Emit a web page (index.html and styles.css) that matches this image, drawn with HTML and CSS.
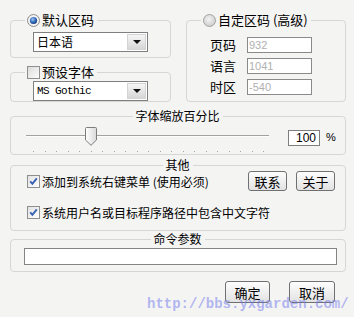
FILE: index.html
```html
<!DOCTYPE html>
<html lang="zh-CN">
<head>
    <meta charset="UTF-8">
    <meta name="viewport" content="width=device-width, initial-scale=1.0">
    <title>区码设置</title>
    <link rel="stylesheet" href="styles.css">
</head>
<body>
    <div class="dialog">
        <div class="top-row">
            <div class="left-col">
                <fieldset class="group">
                    <legend class="legend-left">
                        <span class="opt">
                            <svg class="radio" width="13" height="13" viewBox="0 0 13 13">
                                <defs>
                                    <radialGradient id="dot" cx="40%" cy="35%" r="70%">
                                        <stop offset="0" stop-color="#9fc4f0"/>
                                        <stop offset="0.6" stop-color="#2c66b8"/>
                                        <stop offset="1" stop-color="#12356e"/>
                                    </radialGradient>
                                </defs>
                                <circle cx="6.5" cy="6.5" r="6" fill="#f2f2f2" stroke="#8d8d8d"/>
                                <circle cx="6.5" cy="6.5" r="3.6" fill="url(#dot)"/>
                            </svg>
                            默认区码
                        </span>
                    </legend>
                    <div class="group-body body-code">
                        <div class="combo">
                            <span class="combo-text">日本语</span>
                            <span class="combo-btn"><i class="arrow"></i></span>
                        </div>
                    </div>
                </fieldset>
                <fieldset class="group grow">
                    <legend class="legend-left">
                        <span class="opt">
                            <span class="check"></span>
                            预设字体
                        </span>
                    </legend>
                    <div class="group-body body-font">
                        <div class="combo">
                            <span class="combo-text mono">MS Gothic</span>
                            <span class="combo-btn"><i class="arrow"></i></span>
                        </div>
                    </div>
                </fieldset>
            </div>
            <fieldset class="group right-group">
                <legend class="legend-left">
                    <span class="opt">
                        <svg class="radio" width="13" height="13" viewBox="0 0 13 13">
                            <defs>
                                <radialGradient id="off" cx="45%" cy="40%" r="65%">
                                    <stop offset="0" stop-color="#f4f4f4"/>
                                    <stop offset="1" stop-color="#c9c9c9"/>
                                </radialGradient>
                            </defs>
                            <circle cx="6.5" cy="6.5" r="6" fill="url(#off)" stroke="#a3a3a3"/>
                        </svg>
                        自定区码 (高级)
                    </span>
                </legend>
                <div class="group-body custom-grid">
                    <span class="field-label">页码</span>
                    <span class="num-box">932</span>
                    <span class="field-label">语言</span>
                    <span class="num-box">1041</span>
                    <span class="field-label">时区</span>
                    <span class="num-box">-540</span>
                </div>
            </fieldset>
        </div>

        <fieldset class="group scale-group">
            <legend class="legend-center">字体缩放百分比</legend>
            <div class="group-body scale-body">
                <div class="slider">
                    <div class="slider-track"></div>
                    <div class="slider-ticks">
                        <i></i><i></i><i></i><i></i><i></i><i></i><i></i>
                        <i></i><i></i><i></i><i></i><i></i><i></i><i></i>
                        <i></i><i></i><i></i><i></i><i></i><i></i><i></i>
                    </div>
                    <svg class="slider-thumb" width="12" height="19" viewBox="0 0 12 19">
                        <defs>
                            <linearGradient id="thumb" x1="0" y1="0" x2="1" y2="0">
                                <stop offset="0" stop-color="#ffffff"/>
                                <stop offset="1" stop-color="#d9d9d9"/>
                            </linearGradient>
                        </defs>
                        <path d="M1.5 0.5 H10.5 Q11.5 0.5 11.5 1.5 V13 L6 18.3 L0.5 13 V1.5 Q0.5 0.5 1.5 0.5 Z" fill="url(#thumb)" stroke="#7d7d7d"/>
                    </svg>
                </div>
                <span class="pct-box">100</span>
                <span class="pct-sign">%</span>
            </div>
        </fieldset>

        <fieldset class="group other-group">
            <legend class="legend-center">其他</legend>
            <div class="group-body other-body">
                <div class="other-row">
                    <span class="opt">
                        <span class="check checked">
                            <svg width="11" height="11" viewBox="0 0 11 11"><path d="M2.2 5.4 L4.4 7.8 L8.8 2.4" fill="none" stroke="#3c64b4" stroke-width="2"/></svg>
                        </span>
                        添加到系统右键菜单 (使用必须)
                    </span>
                    <div class="side-btns">
                        <span class="btn">联系</span>
                        <span class="btn">关于</span>
                    </div>
                </div>
                <div class="other-row second">
                    <span class="opt">
                        <span class="check checked">
                            <svg width="11" height="11" viewBox="0 0 11 11"><path d="M2.2 5.4 L4.4 7.8 L8.8 2.4" fill="none" stroke="#3c64b4" stroke-width="2"/></svg>
                        </span>
                        系统用户名或目标程序路径中包含中文字符
                    </span>
                </div>
            </div>
        </fieldset>

        <fieldset class="group cmd-group">
            <legend class="legend-center">命令参数</legend>
            <div class="group-body cmd-body">
                <div class="cmd-input"></div>
            </div>
        </fieldset>

        <div class="footer">
            <span class="btn btn-main ok">确定</span>
            <span class="btn btn-main cancel">取消</span>
        </div>
    </div>

    <div class="watermark">http://bbs.yxgarden.com/</div>
</body>
</html>
```

FILE: styles.css
```css
* {
    box-sizing: border-box;
}
body {
    margin: 0;
    width: 354px;
    height: 317px;
    background: #f4f4f3;
    font-family: "Noto Sans CJK SC", sans-serif;
    font-size: 12px;
    color: #000;
    position: relative;
    overflow: hidden;
}
.dialog {
    padding: 13px 8px 0 10px;
}

/* group boxes */
.group {
    margin: 0;
    padding: 0;
    border: 1px solid #d6d6d4;
    border-radius: 4px;
    min-inline-size: 0;
}
.group legend {
    padding: 0 3px 0 2px;
    line-height: 14px;
}
.legend-left {
    margin-left: 14px;
}
.legend-center {
    margin: 0 auto;
    padding: 0 4px;
}
.opt {
    display: flex;
    align-items: center;
    gap: 2px;
    font-size: 13px;
    white-space: nowrap;
}
.radio {
    display: block;
    flex: none;
}
.check {
    width: 13px;
    height: 13px;
    flex: none;
    border: 1px solid #8e8f8f;
    background: linear-gradient(135deg, #dcdcdc, #fbfbfb);
    display: flex;
    align-items: center;
    justify-content: center;
}
.check.checked {
    background: linear-gradient(135deg, #e2e2e2, #ffffff);
}
.check svg {
    display: block;
}

/* top row */
.top-row {
    display: flex;
    gap: 15px;
}
.left-col {
    width: 161px;
    display: flex;
    flex-direction: column;
    gap: 7px;
}
.grow {
    flex: 1;
}
.right-group {
    width: 160px;
}
.body-code {
    padding: 5px 0 5px 22px;
}
.body-font {
    padding: 2px 0 0 22px;
}
.combo {
    width: 115px;
    height: 20px;
    border: 1px solid #7f7f7f;
    background: #fff;
    display: flex;
}
.combo-text {
    flex: 1;
    padding-left: 3px;
    line-height: 18px;
    font-size: 12px;
}
.combo-text.mono {
    font-family: "Liberation Mono", monospace;
    font-size: 11px;
    letter-spacing: -0.6px;
}
.combo-btn {
    width: 19px;
    margin: 1px;
    border: 1px solid #d4d4d4;
    background: linear-gradient(#f6f6f6, #d6d6d6);
    display: flex;
    align-items: center;
    justify-content: center;
}
.arrow {
    width: 0;
    height: 0;
    border-left: 4px solid transparent;
    border-right: 4px solid transparent;
    border-top: 4px solid #111;
}
.custom-grid {
    display: grid;
    grid-template-columns: 37px 65px;
    grid-auto-rows: 16px;
    row-gap: 5px;
    padding: 10px 0 0 23px;
}
.field-label {
    font-size: 13px;
    line-height: 16px;
}
.num-box {
    border: 1px solid #8a8a8a;
    background: #fff;
    color: #b0b0b0;
    font-family: "Liberation Sans", sans-serif;
    font-size: 11px;
    line-height: 14px;
    padding-left: 1px;
}

/* scale */
.scale-group {
    margin-top: 7px;
}
.scale-body {
    display: flex;
    align-items: flex-start;
    padding: 4px 0 0 15px;
}
.slider {
    position: relative;
    width: 243px;
    height: 27px;
}
.slider-track {
    margin-top: 8px;
    height: 2px;
    border-top: 1px solid #a2a2a2;
    border-bottom: 1px solid #fdfdfd;
}
.slider-ticks {
    display: flex;
    justify-content: space-between;
    margin-top: 14px;
    padding: 0 5px 0 7px;
}
.slider-ticks i {
    width: 1px;
    height: 1px;
    background: #a4a4a4;
}
.slider-thumb {
    position: absolute;
    left: 59px;
    top: 0;
}
.pct-box {
    margin: 3px 0 0 19px;
    width: 32px;
    height: 16px;
    border: 1px solid #7f7f7f;
    background: #fff;
    text-align: right;
    padding-right: 3px;
    font-family: "Liberation Sans", sans-serif;
    font-size: 12px;
    line-height: 14px;
}
.pct-sign {
    margin: 3px 0 0 6px;
    font-family: "Liberation Sans", sans-serif;
    font-size: 11px;
    line-height: 14px;
}

/* other */
.other-group {
    margin-top: 4px;
}
.other-group legend,
.cmd-group legend {
    line-height: 12px;
}
.other-body {
    padding: 0 10px 10px 16px;
}
.other-row {
    display: flex;
    align-items: center;
    height: 20px;
}
.other-row .opt {
    font-size: 12px;
}
.other-row.second {
    margin-top: 13px;
    height: 16px;
}
.side-btns {
    margin-left: auto;
    display: flex;
    gap: 9px;
}
.btn {
    width: 39px;
    height: 20px;
    border: 1px solid #707070;
    border-radius: 3px;
    background: linear-gradient(#fdfdfd, #e2e2e2);
    display: flex;
    align-items: center;
    justify-content: center;
    font-size: 13px;
}

/* command */
.cmd-group {
    margin-top: 2px;
}
.cmd-body {
    padding: 3px 8px 6px 13px;
}
.cmd-input {
    height: 17px;
    border: 1px solid #848484;
    background: #fff;
}

.footer {
    display: flex;
    justify-content: flex-end;
    gap: 19px;
    margin-top: 9px;
    padding-right: 11px;
}
.btn-main {
    height: 22px;
    width: 45px;
}
.btn-main.cancel {
    width: 46px;
}

.watermark {
    position: absolute;
    left: 147px;
    top: 295px;
    font-family: "Liberation Mono", monospace;
    font-weight: bold;
    font-size: 14px;
    line-height: 18px;
    color: rgba(110, 118, 235, 0.5);
    white-space: nowrap;
}
```
